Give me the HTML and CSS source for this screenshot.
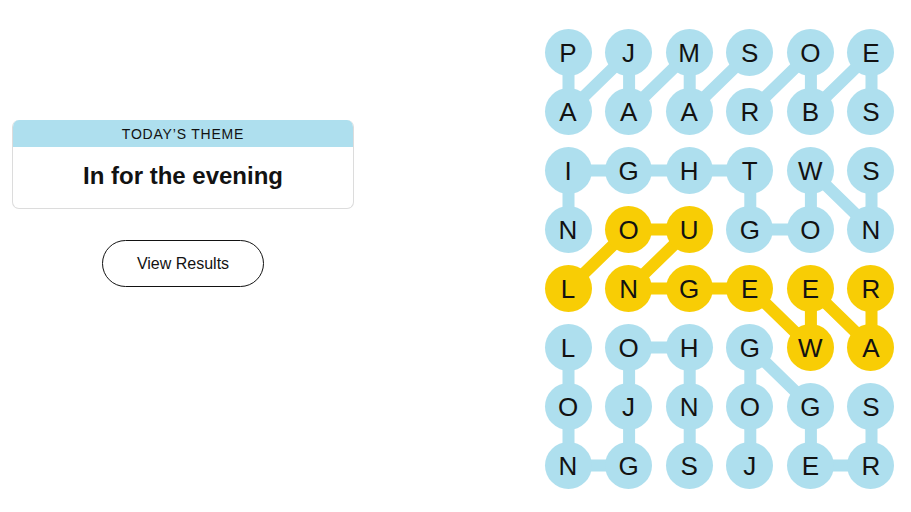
FILE: index.html
```html
<!DOCTYPE html>
<html lang="en">
<head>
<meta charset="utf-8">
<title>Strands</title>
<link rel="stylesheet" href="styles.css">
</head>
<body>
<main class="page">
  <section class="side">
    <div class="theme-card">
      <div class="theme-head">TODAY’S THEME</div>
      <div class="theme-body">In for the evening</div>
    </div>
    <button class="results-btn" type="button">View Results</button>
  </section>
  <section class="board">
    <svg class="links" viewBox="0 0 350 460" width="350" height="460" aria-hidden="true">
      <g class="blue-links">
        <polyline points="23.5,23.5 23.5,82.5 84.1,23.5 84.1,82.5 144.7,23.5 144.7,82.5 205.3,23.5"/>
        <polyline points="205.3,82.5 265.9,23.5 265.9,82.5 326.5,23.5 326.5,82.5"/>
        <polyline points="23.5,200.5 23.5,141.5 84.1,141.5 144.7,141.5 205.3,141.5 205.3,200.5 265.9,200.5 265.9,141.5 326.5,200.5 326.5,141.5"/>
        <polyline points="23.5,318.5 23.5,377.5 23.5,436.5 84.1,436.5 84.1,377.5 84.1,318.5 144.7,318.5 144.7,377.5 144.7,436.5"/>
        <polyline points="205.3,436.5 205.3,377.5 205.3,318.5 265.9,377.5 265.9,436.5 326.5,436.5 326.5,377.5"/>
      </g>
      <g class="gold-links">
        <polyline points="23.5,259.5 84.1,200.5 144.7,200.5 84.1,259.5 144.7,259.5 205.3,259.5 265.9,318.5 265.9,259.5 326.5,318.5 326.5,259.5"/>
      </g>
    </svg>
    <div class="grid">
      <span class="cell blue">P</span><span class="cell blue">J</span><span class="cell blue">M</span><span class="cell blue">S</span><span class="cell blue">O</span><span class="cell blue">E</span>
      <span class="cell blue">A</span><span class="cell blue">A</span><span class="cell blue">A</span><span class="cell blue">R</span><span class="cell blue">B</span><span class="cell blue">S</span>
      <span class="cell blue">I</span><span class="cell blue">G</span><span class="cell blue">H</span><span class="cell blue">T</span><span class="cell blue">W</span><span class="cell blue">S</span>
      <span class="cell blue">N</span><span class="cell gold">O</span><span class="cell gold">U</span><span class="cell blue">G</span><span class="cell blue">O</span><span class="cell blue">N</span>
      <span class="cell gold">L</span><span class="cell gold">N</span><span class="cell gold">G</span><span class="cell gold">E</span><span class="cell gold">E</span><span class="cell gold">R</span>
      <span class="cell blue">L</span><span class="cell blue">O</span><span class="cell blue">H</span><span class="cell blue">G</span><span class="cell gold">W</span><span class="cell gold">A</span>
      <span class="cell blue">O</span><span class="cell blue">J</span><span class="cell blue">N</span><span class="cell blue">O</span><span class="cell blue">G</span><span class="cell blue">S</span>
      <span class="cell blue">N</span><span class="cell blue">G</span><span class="cell blue">S</span><span class="cell blue">J</span><span class="cell blue">E</span><span class="cell blue">R</span>
    </div>
  </section>
</main>
</body>
</html>
```

FILE: styles.css
```css
* { box-sizing: border-box; }

html, body {
  margin: 0;
  padding: 0;
  background: #ffffff;
}

body {
  font-family: "Liberation Sans", Arial, sans-serif;
  color: #121212;
  width: 911px;
  height: 512px;
  overflow: hidden;
}

.page {
  display: flex;
  align-items: flex-start;
  padding-left: 12px;
}

.side {
  width: 342px;
  margin-top: 120px;
  display: flex;
  flex-direction: column;
  align-items: center;
}

.theme-card {
  width: 100%;
  border-radius: 7px;
  overflow: hidden;
  border: 1px solid #dcdcdc;
  border-top: none;
}

.theme-head {
  height: 27px;
  background: #aedfee;
  display: flex;
  align-items: center;
  justify-content: center;
  font-size: 14px;
  letter-spacing: 0.8px;
  color: #121212;
  padding-top: 1px;
}

.theme-body {
  height: 61px;
  display: flex;
  align-items: center;
  justify-content: center;
  font-size: 24px;
  font-weight: 700;
  color: #121212;
  padding-bottom: 3px;
}

.results-btn {
  margin-top: 31px;
  width: 162px;
  height: 47px;
  border: 1px solid #121212;
  border-radius: 999px;
  background: #ffffff;
  font-family: "Liberation Sans", Arial, sans-serif;
  font-size: 16px;
  color: #121212;
  padding: 0;
  display: flex;
  align-items: center;
  justify-content: center;
}

.board {
  position: relative;
  margin-left: 190.5px;
  margin-top: 29px;
  width: 350px;
  height: 460px;
}

.links {
  position: absolute;
  left: 0;
  top: 0;
  z-index: 0;
}

.links polyline {
  fill: none;
  stroke-width: 12;
  stroke-linejoin: round;
  stroke-linecap: round;
}

.blue-links polyline { stroke: #aedfee; }
.gold-links polyline { stroke: #f8cd05; }

.grid {
  position: relative;
  z-index: 1;
  display: grid;
  grid-template-columns: repeat(6, 47px);
  grid-template-rows: repeat(8, 47px);
  column-gap: 13.6px;
  row-gap: 12px;
}

.cell {
  width: 47px;
  height: 47px;
  border-radius: 50%;
  display: flex;
  align-items: center;
  justify-content: center;
  font-size: 26px;
  line-height: 1;
  color: #121212;
}

.cell.blue { background: #aedfee; }
.cell.gold { background: #f8cd05; }
```
